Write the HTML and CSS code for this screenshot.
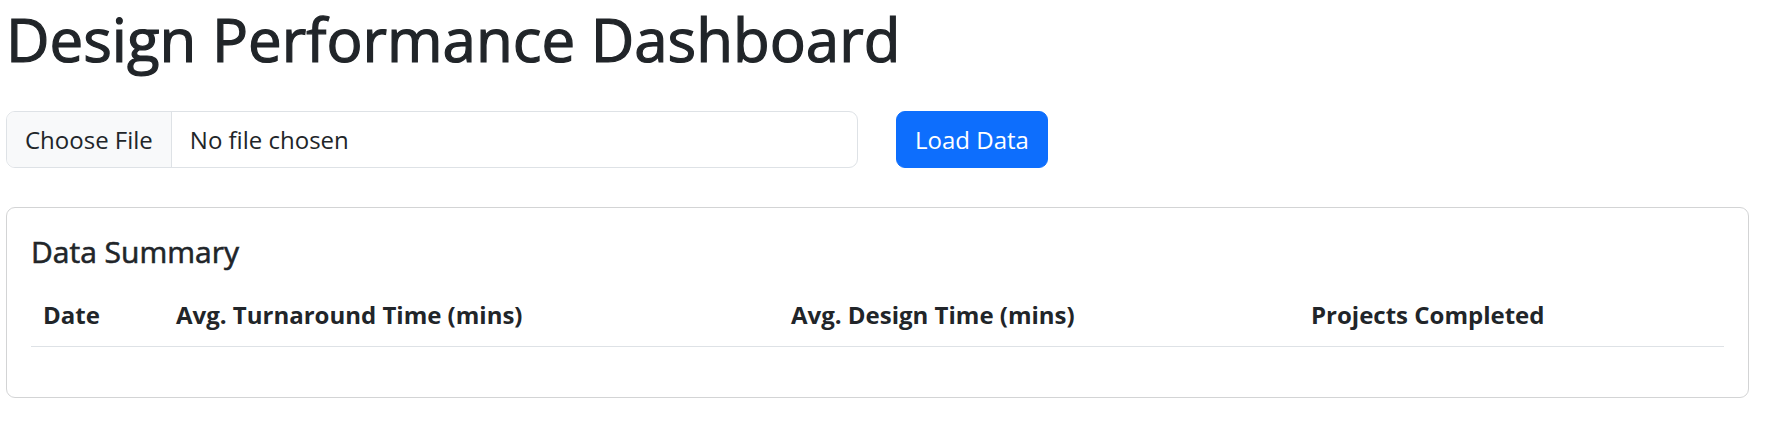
FILE: index.html
```
<!DOCTYPE html>
<html lang="en">

<head>
    <meta charset="UTF-8">
    <meta name="viewport" content="width=device-width, initial-scale=1.0">
    <title>Design Performance Dashboard</title>
    <link rel="stylesheet" href="styles.css">
</head>

<body>
    <div class="page">
        <h1 class="title">Design Performance Dashboard</h1>
        <div class="controls">
            <input type="file" class="file-input" id="fileInput" accept=".csv">
            <button class="btn-load" id="loadBtn">Load Data</button>
        </div>
        <div class="card">
            <div class="card-body">
                <h5 class="card-title">Data Summary</h5>
                <table class="summary">
                    <thead>
                        <tr>
                            <th class="col-date">Date</th>
                            <th class="col-turn">Avg. Turnaround Time (mins)</th>
                            <th class="col-design">Avg. Design Time (mins)</th>
                            <th class="col-projects">Projects Completed</th>
                        </tr>
                    </thead>
                    <tbody id="summaryBody"></tbody>
                </table>
            </div>
        </div>
    </div>
</body>

</html>
```

FILE: styles.css
```
body {
    margin: 0;
    font-family: "Open Sans", "Noto Sans", sans-serif;
    color: #212529;
    background-color: #fff;
}

.page {
    padding: 3px 19px 0 6px;
}

.title {
    margin: 0 0 36px;
    font-size: 60px;
    line-height: 72px;
    font-weight: 400;
    -webkit-text-stroke: 1.2px #212529;
}

.controls {
    display: flex;
    gap: 38px;
    margin-bottom: 39px;
}

.file-input {
    box-sizing: border-box;
    width: 852px;
    height: 57px;
    padding: 9px 18px;
    font-family: inherit;
    font-size: 24px;
    line-height: 36px;
    color: #212529;
    background-color: #fff;
    border: 1px solid #dee2e6;
    border-radius: 9px;
    overflow: hidden;
}

.file-input::file-selector-button {
    height: 55px;
    padding: 9px 18px;
    margin: -9px 18px -9px -18px;
    font-family: inherit;
    font-size: 24px;
    color: #212529;
    background-color: #f8f9fa;
    border: 0;
    border-right: 1px solid #dee2e6;
    border-radius: 0;
}

.btn-load {
    box-sizing: border-box;
    width: 152px;
    height: 57px;
    padding: 9px 18px;
    font-family: inherit;
    font-size: 24px;
    line-height: 36px;
    color: #fff;
    background-color: #0d6efd;
    border: 1px solid #0d6efd;
    border-radius: 9px;
}

.card {
    border: 1px solid #d3d4d5;
    border-radius: 9px;
}

.card-body {
    padding: 24px;
}

.card-title {
    margin: 0 0 10px;
    padding-top: 2px;
    font-size: 30px;
    line-height: 36px;
    font-weight: 400;
    -webkit-text-stroke: 0.6px #212529;
}

.summary {
    width: 100%;
    table-layout: fixed;
    border-collapse: collapse;
    margin-bottom: 26px;
}

.summary th {
    box-sizing: border-box;
    padding: 17px 12px 13px;
    font-size: 24px;
    line-height: 36px;
    font-weight: 700;
    text-align: left;
    border-bottom: 1px solid #dee2e6;
}

.col-date { width: 133px; }
.col-turn { width: 615px; }
.col-design { width: 520px; }
```
